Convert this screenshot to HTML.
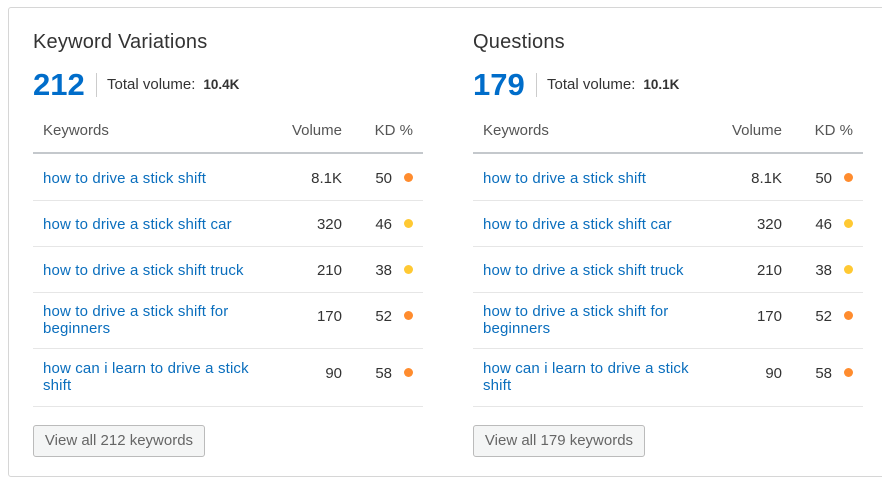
<!DOCTYPE html>
<html><head><meta charset="utf-8"><style>
*{margin:0;padding:0;box-sizing:border-box}
body{width:882px;height:485px;background:#fff;font-family:"Liberation Sans",sans-serif;position:relative;overflow:hidden;color:#333}
.card{position:absolute;left:8px;top:7px;width:880px;height:470px;border:1px solid #d6d6d6;border-radius:3px}
.col{position:absolute;top:0;width:390px;height:485px}
.a{position:absolute;white-space:nowrap}
h2{position:absolute;top:31px;left:0;font-size:20px;font-weight:normal;color:#333;letter-spacing:0.2px}
.big{position:absolute;top:67px;left:0;font-size:31px;font-weight:bold;color:#006dca}
.sep{position:absolute;left:63px;top:73px;width:1px;height:24px;background:#ccc}
.tv{position:absolute;top:76px;left:74px;font-size:15px;color:#333}
.tv b{margin-left:8px;font-size:13.5px}
.hd{top:122px;font-size:15px;color:#555}
.hl{position:absolute;left:0;top:152px;width:390px;height:2px;background:#c4c8cc}
.rl{position:absolute;left:0;width:390px;height:1px;background:#e6e6e6}
.kw{position:absolute;left:10px;font-size:15px;color:#0a6ebd;line-height:17px;width:215px;white-space:normal;letter-spacing:0.15px}
.v{position:absolute;right:81px;font-size:15px;color:#333}
.kd{position:absolute;right:31px;font-size:15px;color:#333}
.dot{position:absolute;right:10px;width:9px;height:9px;border-radius:50%}
.o{background:#ff8c2e}.y{background:#ffc933}
.btn{position:absolute;left:0;top:425px;width:172px;height:32px;border:1px solid #bbb;border-radius:3px;background:#f4f5f5;font-size:15px;color:#666;text-align:center;line-height:30px}
</style></head><body>
<div class="card"></div>

<div class="col" style="left:33px">
<h2>Keyword Variations</h2>
<div class="big">212</div><div class="sep"></div>
<div class="tv">Total volume:<b>10.4K</b></div>
<div class="a hd" style="left:10px">Keywords</div>
<div class="a hd" style="right:81px">Volume</div>
<div class="a hd" style="right:10px">KD %</div>
<div class="hl"></div>
<div class="kw" style="top:170px">how to drive a stick shift</div><div class="v" style="top:170px">8.1K</div><div class="kd" style="top:170px">50</div><div class="dot o" style="top:173px"></div>
<div class="rl" style="top:200px"></div>
<div class="kw" style="top:216px">how to drive a stick shift car</div><div class="v" style="top:216px">320</div><div class="kd" style="top:216px">46</div><div class="dot y" style="top:219px"></div>
<div class="rl" style="top:246px"></div>
<div class="kw" style="top:262px">how to drive a stick shift truck</div><div class="v" style="top:262px">210</div><div class="kd" style="top:262px">38</div><div class="dot y" style="top:265px"></div>
<div class="rl" style="top:292px"></div>
<div class="kw" style="top:303px">how to drive a stick shift for beginners</div><div class="v" style="top:308px">170</div><div class="kd" style="top:308px">52</div><div class="dot o" style="top:311px"></div>
<div class="rl" style="top:348px"></div>
<div class="kw" style="top:360px">how can i learn to drive a stick shift</div><div class="v" style="top:365px">90</div><div class="kd" style="top:365px">58</div><div class="dot o" style="top:368px"></div>
<div class="rl" style="top:406px"></div>
<div class="btn">View all 212 keywords</div>
</div>

<div class="col" style="left:473px">
<h2>Questions</h2>
<div class="big">179</div><div class="sep"></div>
<div class="tv">Total volume:<b>10.1K</b></div>
<div class="a hd" style="left:10px">Keywords</div>
<div class="a hd" style="right:81px">Volume</div>
<div class="a hd" style="right:10px">KD %</div>
<div class="hl"></div>
<div class="kw" style="top:170px">how to drive a stick shift</div><div class="v" style="top:170px">8.1K</div><div class="kd" style="top:170px">50</div><div class="dot o" style="top:173px"></div>
<div class="rl" style="top:200px"></div>
<div class="kw" style="top:216px">how to drive a stick shift car</div><div class="v" style="top:216px">320</div><div class="kd" style="top:216px">46</div><div class="dot y" style="top:219px"></div>
<div class="rl" style="top:246px"></div>
<div class="kw" style="top:262px">how to drive a stick shift truck</div><div class="v" style="top:262px">210</div><div class="kd" style="top:262px">38</div><div class="dot y" style="top:265px"></div>
<div class="rl" style="top:292px"></div>
<div class="kw" style="top:303px">how to drive a stick shift for beginners</div><div class="v" style="top:308px">170</div><div class="kd" style="top:308px">52</div><div class="dot o" style="top:311px"></div>
<div class="rl" style="top:348px"></div>
<div class="kw" style="top:360px">how can i learn to drive a stick shift</div><div class="v" style="top:365px">90</div><div class="kd" style="top:365px">58</div><div class="dot o" style="top:368px"></div>
<div class="rl" style="top:406px"></div>
<div class="btn">View all 179 keywords</div>
</div>
</body></html>
